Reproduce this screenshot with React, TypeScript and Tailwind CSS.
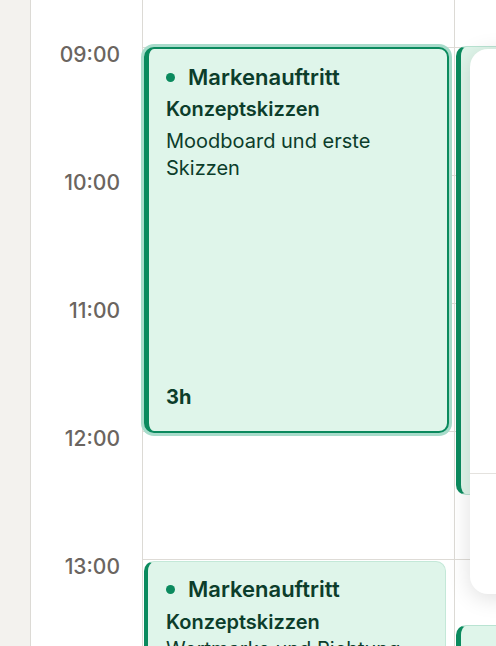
import React from "react";

const times = ["09:00", "10:00", "11:00", "12:00", "13:00"];

function GridRows() {
  return (
    <div className="flex flex-col mt-[-80px]">
      {Array.from({ length: 7 }).map((_, i) => (
        <div key={i} className="h-[128px] shrink-0 border-b border-[#dedbd6]" />
      ))}
    </div>
  );
}

export default function App() {
  return (
    <div
      className="w-[496px] h-[646px] overflow-hidden flex bg-white relative"
      style={{ fontFamily: "Inter, 'Noto Sans', sans-serif" }}
    >
      {/* left strip */}
      <div className="w-[31px] shrink-0 bg-[#f3f2ee] border-r border-[#dcdad5]" />

      {/* time column */}
      <div className="w-[112px] shrink-0 border-r border-[#dcdad5] flex flex-col pt-[41px] pr-[22px]">
        {times.map((t) => (
          <div key={t} className="h-[128px] shrink-0 text-right text-[21px] leading-[28px] font-medium text-[#6b6560]">
            {t}
          </div>
        ))}
      </div>

      {/* day column */}
      <div className="w-[312px] shrink-0 border-r border-[#dcdad5] relative">
        <GridRows />

        {/* Event 1 (selected) */}
        <div className="absolute left-[1px] top-[47px] w-[305px] h-[386px] rounded-[10px] bg-[#dff5ea] border-2 border-l-[5px] border-[#0b8a5e] shadow-[0_0_0_3px_#a8dccb] flex flex-col pl-[17px] pr-3 pt-[14px] pb-[22px] text-[#0c3d2b]">
          <div className="flex items-center gap-[13px]">
            <span className="w-[9px] h-[9px] rounded-full bg-[#0b8a5e]" />
            <span className="text-[22px] leading-[28px] font-semibold">Markenauftritt</span>
          </div>
          <div className="text-[20px] leading-[28px] font-semibold mt-[4px]">Konzeptskizzen</div>
          <div className="text-[20px] leading-[27px] mt-[5px]">
            Moodboard und erste
            <br />
            Skizzen
          </div>
          <div className="mt-auto text-[20px] leading-[24px] font-bold">3h</div>
        </div>

        {/* Event 2 */}
        <div className="absolute left-[1px] top-[561px] w-[302px] h-[160px] rounded-[10px] bg-[#dff5ea] border border-l-[4px] border-[#c4e8d8] border-l-[#0b8a5e] flex flex-col pl-[18px] pr-3 pt-[13px] text-[#0c3d2b]">
          <div className="flex items-center gap-[13px]">
            <span className="w-[9px] h-[9px] rounded-full bg-[#0b8a5e]" />
            <span className="text-[22px] leading-[28px] font-semibold">Markenauftritt</span>
          </div>
          <div className="text-[20px] leading-[28px] font-semibold mt-[5px]">Konzeptskizzen</div>
          <div className="text-[20px] leading-[27px] mt-0">Wortmarke und Richtung</div>
        </div>
      </div>

      {/* next column */}
      <div className="flex-1 relative">
        <GridRows />

        <div className="absolute left-[1px] top-[46px] w-[60px] h-[449px] rounded-[10px] bg-[#dff5ea] border border-l-[5px] border-[#b9e3d2] border-l-[#0b8a5e]" />
        <div className="absolute left-[1px] top-[625px] w-[60px] h-[80px] rounded-[10px] bg-[#dff5ea] border border-l-[5px] border-[#b9e3d2] border-l-[#0b8a5e]" />

        {/* overlay panel */}
        <div className="absolute left-[15px] top-[49px] w-[80px] h-[545px] rounded-l-[18px] bg-white shadow-[0_4px_22px_rgba(0,0,0,0.13)] flex flex-col">
          <div className="h-[425px] border-b border-[#e4e2de]" />
        </div>
      </div>
    </div>
  );
}
